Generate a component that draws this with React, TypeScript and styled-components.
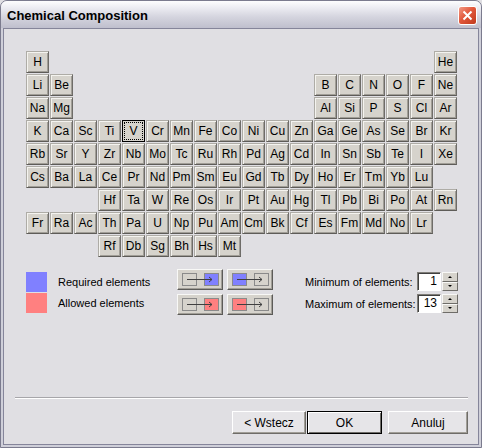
import React from "react";
import styled, { createGlobalStyle } from "styled-components";

type El = [string, number, number];

const rows: [number, number, string[]][] = [
  [1, 1, ["H"]],
  [1, 18, ["He"]],
  [2, 1, ["Li", "Be"]],
  [2, 13, ["B", "C", "N", "O", "F", "Ne"]],
  [3, 1, ["Na", "Mg"]],
  [3, 13, ["Al", "Si", "P", "S", "Cl", "Ar"]],
  [4, 1, ["K", "Ca", "Sc", "Ti", "V", "Cr", "Mn", "Fe", "Co", "Ni", "Cu", "Zn", "Ga", "Ge", "As", "Se", "Br", "Kr"]],
  [5, 1, ["Rb", "Sr", "Y", "Zr", "Nb", "Mo", "Tc", "Ru", "Rh", "Pd", "Ag", "Cd", "In", "Sn", "Sb", "Te", "I", "Xe"]],
  [6, 1, ["Cs", "Ba", "La", "Ce", "Pr", "Nd", "Pm", "Sm", "Eu", "Gd", "Tb", "Dy", "Ho", "Er", "Tm", "Yb", "Lu"]],
  [7, 4, ["Hf", "Ta", "W", "Re", "Os", "Ir", "Pt", "Au", "Hg", "Tl", "Pb", "Bi", "Po", "At", "Rn"]],
  [8, 1, ["Fr", "Ra", "Ac", "Th", "Pa", "U", "Np", "Pu", "Am", "Cm", "Bk", "Cf", "Es", "Fm", "Md", "No", "Lr"]],
  [9, 4, ["Rf", "Db", "Sg", "Bh", "Hs", "Mt"]],
];

const elements: El[] = rows.flatMap(([row, start, syms]) =>
  syms.map((s, i) => [s, start + i, row] as El)
);

const BLUE = "#8080ff";
const RED = "#ff8080";

const ArrowIcon = ({ color, toRight }: { color: string; toRight: boolean }) => (
  <svg width="37" height="14" viewBox="0 0 37 14">
    <rect x="0.5" y="0.5" width="14" height="12" fill={toRight ? "none" : color} stroke="#8a8a8a" />
    <rect x="22.5" y="0.5" width="14" height="12" fill={toRight ? color : "none"} stroke="#8a8a8a" />
    <line x1="5" y1="6.5" x2="30" y2="6.5" stroke="#404040" />
    <polyline points="27,4 30,6.5 27,9" fill="none" stroke="#404040" />
  </svg>
);

const App = () => {
  return (
    <>
      <GlobalStyle />
      <Window>
        <TitleBar>
          <Title>Chemical Composition</Title>
          <CloseButton>
            <svg width="11" height="11" viewBox="0 0 11 11">
              <path d="M1.5 1.5 L9.5 9.5 M9.5 1.5 L1.5 9.5" stroke="#fff" strokeWidth="2" />
            </svg>
          </CloseButton>
        </TitleBar>
        <Frame>
          <Body>
            <Main>
              <Table>
                {elements.map(([sym, col, row]) => (
                  <Cell key={sym} $col={col} $row={row} $focused={sym === "V"}>
                    {sym}
                  </Cell>
                ))}
              </Table>
              <Controls>
                <Legend>
                  <LegendRow>
                    <Swatch $color={BLUE} />
                    <span>Required elements</span>
                  </LegendRow>
                  <LegendRow>
                    <Swatch $color={RED} />
                    <span>Allowed elements</span>
                  </LegendRow>
                </Legend>
                <ArrowGrid>
                  <ArrowButton>
                    <ArrowIcon color={BLUE} toRight />
                  </ArrowButton>
                  <ArrowButton>
                    <ArrowIcon color={BLUE} toRight={false} />
                  </ArrowButton>
                  <ArrowButton>
                    <ArrowIcon color={RED} toRight />
                  </ArrowButton>
                  <ArrowButton>
                    <ArrowIcon color={RED} toRight={false} />
                  </ArrowButton>
                </ArrowGrid>
                <Spinners>
                  <SpinRow>
                    <SpinLabel>Minimum of elements:</SpinLabel>
                    <Edit>1</Edit>
                    <SpinButtons>
                      <SpinHalf>
                        <UpTri />
                      </SpinHalf>
                      <SpinHalf>
                        <DownTri />
                      </SpinHalf>
                    </SpinButtons>
                  </SpinRow>
                  <SpinRow>
                    <SpinLabel>Maximum of elements:</SpinLabel>
                    <Edit>13</Edit>
                    <SpinButtons>
                      <SpinHalf>
                        <UpTri />
                      </SpinHalf>
                      <SpinHalf>
                        <DownTri />
                      </SpinHalf>
                    </SpinButtons>
                  </SpinRow>
                </Spinners>
              </Controls>
            </Main>
            <Separator />
            <Footer>
              <PushButton $width={74}>&lt; Wstecz</PushButton>
              <PushButton $width={75} $default>
                OK
              </PushButton>
              <PushButton $width={80} $gap={5}>
                Anuluj
              </PushButton>
            </Footer>
          </Body>
        </Frame>
      </Window>
    </>
  );
};

export default App;

const GlobalStyle = createGlobalStyle`
  html, body {
    margin: 0;
    padding: 0;
    background: #e0dfe3;
  }
  body {
    font-family: "Liberation Sans", Arial, sans-serif;
    font-size: 11px;
    color: #000;
  }
`;

const Window = styled.div`
  width: 482px;
  height: 448px;
  box-sizing: border-box;
  border: 1px solid #7b7b8e;
  border-radius: 7px 7px 0 0;
  background: #cfcfd9;
  display: flex;
  flex-direction: column;
  overflow: hidden;
`;

const TitleBar = styled.div`
  height: 27px;
  flex: none;
  display: flex;
  align-items: center;
  justify-content: space-between;
  padding: 0 4px 0 6px;
  background: linear-gradient(#fdfdfe 0%, #ececf2 25%, #d4d4de 60%, #bfbfcd 100%);
`;

const Title = styled.div`
  font-family: "Liberation Sans", Arial, sans-serif;
  font-weight: bold;
  font-size: 13px;
  color: #000;
  padding-top: 2px;
`;

const CloseButton = styled.div`
  width: 19px;
  height: 19px;
  box-sizing: border-box;
  border: 1px solid #fff;
  border-radius: 3px;
  background: linear-gradient(135deg, #f29a86 0%, #e2583c 45%, #c0391c 100%);
  display: flex;
  align-items: center;
  justify-content: center;
  margin-top: 1px;
`;

const Frame = styled.div`
  flex: 1;
  display: flex;
  padding: 0 2px 2px 2px;
`;

const Body = styled.div`
  flex: 1;
  display: flex;
  flex-direction: column;
  border: 1px solid #85859a;
  background: #e0dfe3;
`;

const Main = styled.div`
  flex: 1;
  padding: 22px 0 0 22px;
`;

const Table = styled.div`
  display: grid;
  grid-template-columns: repeat(18, 23px);
  grid-template-rows: repeat(9, 22px);
  gap: 1px;
`;

const Cell = styled.div<{ $col: number; $row: number; $focused?: boolean }>`
  grid-column: ${(p) => p.$col};
  grid-row: ${(p) => p.$row};
  box-sizing: border-box;
  display: flex;
  align-items: center;
  justify-content: center;
  font-size: 12px;
  background: #d6d3cc;
  border: 1px solid;
  border-color: #aeaca6 #6e6c68 #5e5c58 #aeaca6;
  box-shadow: inset 1px 1px #f4f3ef, inset -1px -1px #a19e97;
  ${(p) =>
    p.$focused &&
    `
    border-color: #000;
    box-shadow: none;
    outline: 1px dotted #000;
    outline-offset: -3px;
  `}
`;

const Controls = styled.div`
  margin-top: 12px;
  display: grid;
  grid-template-columns: 151px 128px auto;
  align-items: start;
`;

const Legend = styled.div`
  padding-top: 3px;
  display: flex;
  flex-direction: column;
  gap: 1px;
`;

const LegendRow = styled.div`
  display: flex;
  align-items: center;
  gap: 11px;
  height: 20px;
`;

const Swatch = styled.div<{ $color: string }>`
  width: 21px;
  height: 20px;
  background: ${(p) => p.$color};
`;

const ArrowGrid = styled.div`
  display: grid;
  grid-template-columns: repeat(2, 46px);
  grid-auto-rows: 21px;
  gap: 4px;
`;

const ArrowButton = styled.div`
  box-sizing: border-box;
  display: flex;
  align-items: center;
  justify-content: center;
  background: #d6d3cc;
  border: 1px solid;
  border-color: #f8f8f6 #5c5b58 #5c5b58 #f8f8f6;
  box-shadow: inset -1px -1px #a19e97;
`;

const Spinners = styled.div`
  padding-top: 3px;
  display: flex;
  flex-direction: column;
  gap: 3px;
`;

const SpinRow = styled.div`
  display: flex;
  align-items: center;
  height: 19px;
`;

const SpinLabel = styled.div`
  width: 112px;
`;

const Edit = styled.div`
  width: 24px;
  height: 19px;
  box-sizing: border-box;
  background: #fff;
  border: 1px solid;
  border-color: #7f7d78 #fff #fff #7f7d78;
  box-shadow: inset 1px 1px #404040;
  text-align: right;
  padding: 0 3px;
  font-size: 12px;
  line-height: 17px;
`;

const SpinButtons = styled.div`
  width: 16px;
  height: 19px;
  margin-left: 1px;
  display: flex;
  flex-direction: column;
`;

const SpinHalf = styled.div`
  flex: 1;
  box-sizing: border-box;
  display: flex;
  align-items: center;
  justify-content: center;
  background: #d6d3cc;
  border: 1px solid;
  border-color: #f8f8f6 #6e6c68 #6e6c68 #f8f8f6;
`;

const UpTri = styled.div`
  width: 0;
  height: 0;
  border-left: 2px solid transparent;
  border-right: 2px solid transparent;
  border-bottom: 2px solid #000;
`;

const DownTri = styled.div`
  width: 0;
  height: 0;
  border-left: 2px solid transparent;
  border-right: 2px solid transparent;
  border-top: 2px solid #000;
`;

const Separator = styled.div`
  margin: 0 10px 0 11px;
  border-top: 1px solid #a7a6aa;
  border-bottom: 1px solid #fff;
`;

const Footer = styled.div`
  display: flex;
  justify-content: flex-end;
  gap: 1px;
  padding: 12px 10px 10px 0;
`;

const PushButton = styled.div<{ $width: number; $default?: boolean; $gap?: number }>`
  width: ${(p) => p.$width}px;
  height: 23px;
  box-sizing: border-box;
  margin-left: ${(p) => p.$gap ?? 0}px;
  display: flex;
  align-items: center;
  justify-content: center;
  background: #e6e5e8;
  border: 1px solid;
  border-color: ${(p) => (p.$default ? "#000" : "#fff #6e6c68 #6e6c68 #fff")};
  box-shadow: ${(p) =>
    p.$default
      ? "inset 1px 1px #fff, inset -1px -1px #6e6c68"
      : "inset -1px -1px #a19e97"};
  font-size: 12px;
`;
